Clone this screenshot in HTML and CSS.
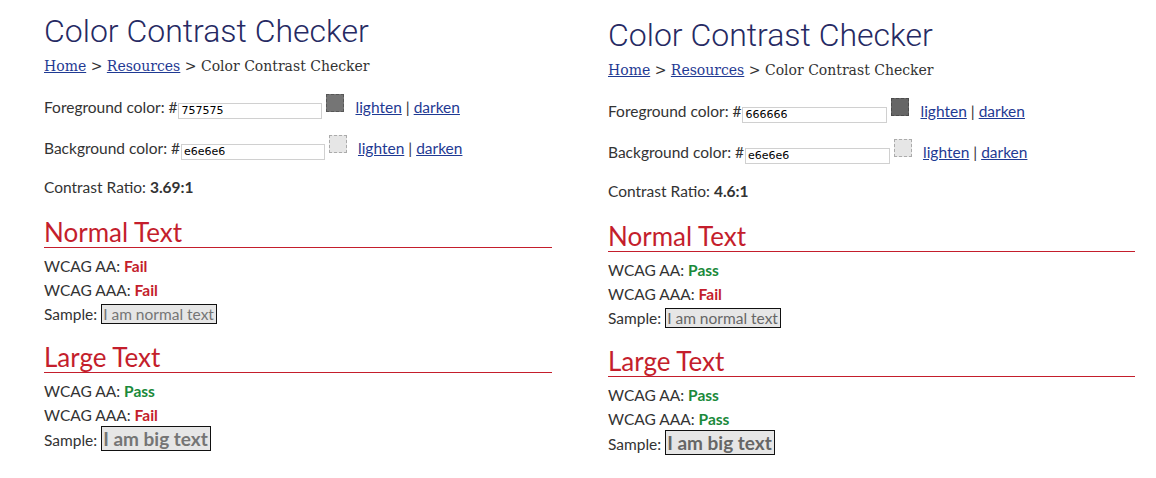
FILE: index.html
```html
<!DOCTYPE html>
<html>
<head>
<meta charset="utf-8">
<link rel="stylesheet" href="styles.css">
</head>
<body>
<div class="page">
  <section class="panel panel-left">
    <h1 class="title">Color Contrast Checker</h1>
    <div class="crumbs"><a href="#">Home</a> &gt; <a href="#">Resources</a> &gt; Color Contrast Checker</div>
    <div class="row row-fg">Foreground color: #<input class="hex" type="text" value="757575"><span class="swatch swatch-fg1"></span><a class="tool" href="#">lighten</a> | <a href="#">darken</a></div>
    <div class="row row-bg">Background color: #<input class="hex" type="text" value="e6e6e6"><span class="swatch swatch-bg"></span><a class="tool" href="#">lighten</a> | <a href="#">darken</a></div>
    <div class="row ratio">Contrast Ratio: <b>3.69:1</b></div>
    <h2 class="sec">Normal Text</h2>
    <div class="line">WCAG AA: <b class="fail">Fail</b></div>
    <div class="line">WCAG AAA: <b class="fail">Fail</b></div>
    <div class="line">Sample: <span class="sample sample-1">I am normal text</span></div>
    <h2 class="sec sec-large">Large Text</h2>
    <div class="line">WCAG AA: <b class="pass">Pass</b></div>
    <div class="line">WCAG AAA: <b class="fail">Fail</b></div>
    <div class="line">Sample: <span class="sample big sample-1">I am big text</span></div>
  </section>
  <section class="panel panel-right">
    <h1 class="title">Color Contrast Checker</h1>
    <div class="crumbs"><a href="#">Home</a> &gt; <a href="#">Resources</a> &gt; Color Contrast Checker</div>
    <div class="row row-fg">Foreground color: #<input class="hex wide" type="text" value="666666"><span class="swatch swatch-fg2"></span><a class="tool" href="#">lighten</a> | <a href="#">darken</a></div>
    <div class="row row-bg">Background color: #<input class="hex wide" type="text" value="e6e6e6"><span class="swatch swatch-bg"></span><a class="tool" href="#">lighten</a> | <a href="#">darken</a></div>
    <div class="row ratio">Contrast Ratio: <b>4.6:1</b></div>
    <h2 class="sec">Normal Text</h2>
    <div class="line">WCAG AA: <b class="pass">Pass</b></div>
    <div class="line">WCAG AAA: <b class="fail">Fail</b></div>
    <div class="line">Sample: <span class="sample sample-2">I am normal text</span></div>
    <h2 class="sec sec-large">Large Text</h2>
    <div class="line">WCAG AA: <b class="pass">Pass</b></div>
    <div class="line">WCAG AAA: <b class="pass">Pass</b></div>
    <div class="line">Sample: <span class="sample big sample-2">I am big text</span></div>
  </section>
</div>
</body>
</html>
```

FILE: styles.css
```css
html, body {
  margin: 0;
  padding: 0;
  background: #fff;
}
body {
  font-family: "Lato", "Liberation Sans", sans-serif;
  font-size: 15.5px;
  color: #333;
}
.page {
  display: flex;
  align-items: flex-start;
}
.panel-left {
  margin-left: 44px;
  width: 508px;
  padding-top: 11px;
}
.panel-right {
  margin-left: 56px;
  width: 527px;
  padding-top: 15px;
}
.title {
  margin: 0;
  font-family: "Roboto", sans-serif;
  font-weight: 300;
  font-size: 32px;
  line-height: 40px;
  color: #262a63;
}
.crumbs {
  margin-top: 5px;
  font-family: "DejaVu Serif", serif;
  font-size: 14px;
  line-height: 20px;
  color: #333;
}
a {
  color: #1f3a93;
  text-decoration: underline;
}
.row {
  line-height: 24px;
  height: 24px;
}
.row-fg { margin-top: 19px; }
.row-bg { margin-top: 17px; }
.ratio { margin-top: 15px; }
.hex {
  box-sizing: border-box;
  width: 144px;
  height: 16px;
  margin: 0 0 0 1px;
  padding: 0 2px;
  border: 1px solid #d0d0d0;
  font-family: "DejaVu Sans", sans-serif;
  font-size: 11px;
  color: #000;
  vertical-align: -1px;
  outline: none;
}
.hex.wide { width: 145px; }
.swatch {
  display: inline-block;
  box-sizing: border-box;
  width: 18px;
  height: 18px;
  margin-left: 4px;
  border: 1px dashed rgba(0,0,0,0.25);
  vertical-align: top;
  margin-top: -1px;
}
.swatch-fg1 { background: #757575; }
.swatch-fg2 { background: #666666; }
.swatch-bg { background: #e6e6e6; }
.tool { margin-left: 11px; }
.sec {
  margin: 18px 0 0;
  font-weight: 400;
  font-size: 26px;
  line-height: 30px;
  color: #c41e2c;
  border-bottom: 1px solid #c41e2c;
}
.sec-large { margin-top: 16px; }
.sec + .line { margin-top: 6px; }
.line {
  line-height: 24px;
  height: 24px;
}
.pass { color: #1b8a3b; }
.fail { color: #c41e2c; }
.sample {
  border: 1px solid #111;
  background: #e6e6e6;
  padding: 0 2px 0 1px;
}
.sample-1 { color: #757575; }
.sample-2 { color: #666666; }
.big {
  font-weight: 700;
  font-size: 19px;
}
```
